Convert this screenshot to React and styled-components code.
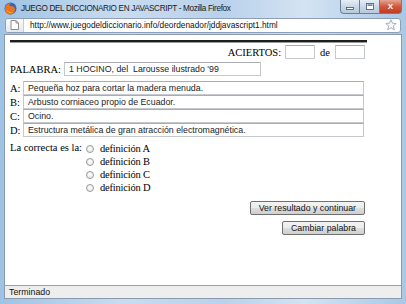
import React from 'react';
import styled, { createGlobalStyle } from 'styled-components';

const GlobalStyle = createGlobalStyle`
  html, body {
    margin: 0;
    padding: 0;
    overflow: hidden;
    background: #ffffff;
  }
`;

const Window = styled.div`
  width: 406px;
  height: 304px;
  box-sizing: border-box;
  display: flex;
  flex-direction: column;
  background: linear-gradient(90deg, #9fc3e4 0%, #c9dcef 30%, #b9d1ea 55%, #d4e3f2 75%, #a8c8e6 100%);
  padding: 0 4px 5px 4px;
  font-family: "Liberation Sans", Arial, sans-serif;
`;

const TitleBar = styled.div`
  height: 16px;
  display: flex;
  align-items: center;
  gap: 4px;
`;

const TitleText = styled.span`
  font-size: 8.2px;
  letter-spacing: -0.35px;
  color: #1a1a1a;
  white-space: nowrap;
`;

const WinButtons = styled.div`
  margin-left: auto;
  display: flex;
  align-self: flex-start;
`;

const WinButton = styled.div`
  width: ${p => (p.$close ? 22 : 20)}px;
  height: 14px;
  box-sizing: border-box;
  border: 1px solid #6d7f95;
  border-top: none;
  border-left-width: ${p => (p.$first ? 1 : 0)}px;
  border-radius: ${p => (p.$first ? '0 0 0 4px' : p.$close ? '0 0 4px 0' : '0')};
  background: ${p => (p.$close
    ? 'linear-gradient(#e8a493, #d0583e 50%, #c23b20)'
    : 'linear-gradient(#e6eef7, #c9d7e6 50%, #b7c9dc)')};
  display: flex;
  align-items: center;
  justify-content: center;
  color: ${p => (p.$close ? '#fff' : '#44526a')};
  font-size: 8px;
  font-weight: bold;
`;

const AddressRow = styled.div`
  height: 18px;
  display: flex;
  align-items: center;
  padding: 0 1px;
`;

const AddressField = styled.div`
  flex: 1;
  height: 15px;
  box-sizing: border-box;
  border: 1px solid #8d9fb8;
  border-radius: 3px;
  background: #ffffff;
  display: flex;
  align-items: center;
`;

const SiteButton = styled.div`
  width: 18px;
  height: 13px;
  box-sizing: border-box;
  border-right: 1px solid #c3ccd8;
  border-radius: 3px 0 0 3px;
  background: linear-gradient(#fbfbfb, #e4e8ee);
  display: flex;
  align-items: center;
  justify-content: center;
`;

const UrlText = styled.span`
  margin-left: 6px;
  font-size: 8.3px;
  color: #111;
  white-space: nowrap;
`;

const Star = styled.div`
  margin-left: auto;
  margin-right: 3px;
  display: flex;
`;

const Content = styled.div`
  flex: 1;
  background: #ffffff;
  border: 1px solid #8a9bb0;
  border-bottom: none;
  padding: 5px 0 0 5px;
  font-family: "Liberation Serif", "Times New Roman", serif;
  font-size: 10.5px;
  color: #000;
`;

const Form = styled.div`
  width: 357px;
  display: flex;
  flex-direction: column;
`;

const Rule = styled.div`
  height: 2px;
  background: #1e1e1e;
  border-bottom: 1px solid #9a9a9a;
`;

const ScoreRow = styled.div`
  display: flex;
  justify-content: flex-end;
  align-items: center;
  gap: 3px;
  margin-top: 2px;
  padding-right: 2px;
`;

const Label = styled.span`
  white-space: nowrap;
  margin: ${p => p.$margin || '0'};
`;

const Field = styled.div`
  width: ${p => p.$w}px;
  height: 14px;
  box-sizing: border-box;
  border: 1px solid #c5c8cd;
  border-top-color: #a9acb2;
  background: #fff;
  font-family: "Liberation Sans", Arial, sans-serif;
  font-size: 8.8px;
  color: #222;
  display: flex;
  align-items: center;
  padding-left: 4px;
  white-space: nowrap;
  overflow: hidden;
`;

const WordRow = styled.div`
  display: flex;
  align-items: center;
  gap: 3px;
  margin-top: 3px;
`;

const Definitions = styled.div`
  display: flex;
  flex-direction: column;
  margin-top: 5px;
`;

const DefRow = styled.div`
  display: flex;
  align-items: center;
  height: 14px;
`;

const Letter = styled.span`
  width: 13px;
`;

const AnswerBlock = styled.div`
  display: grid;
  grid-template-columns: 76px auto;
  margin-top: 5px;
`;

const Options = styled.div`
  display: flex;
  flex-direction: column;
`;

const Option = styled.label`
  display: flex;
  align-items: center;
  height: 13px;
  gap: 6px;
  letter-spacing: -0.2px;
`;

const Radio = styled.span`
  width: 8px;
  height: 8px;
  box-sizing: border-box;
  border-radius: 50%;
  border: 1px solid #9a9a9a;
  background: radial-gradient(circle at 50% 40%, #ffffff, #e2e2e2);
`;

const Buttons = styled.div`
  display: flex;
  flex-direction: column;
  align-items: flex-end;
  gap: 6px;
  margin-top: 7px;
  padding-right: 2px;
`;

const Button = styled.div`
  height: 14px;
  box-sizing: border-box;
  padding: 0 8px;
  border: 1px solid #707070;
  border-radius: 2px;
  background: linear-gradient(#f3f3f3 0%, #ebebeb 50%, #dddddd 51%, #cfcfcf 100%);
  font-family: "Liberation Sans", Arial, sans-serif;
  font-size: 8.8px;
  color: #111;
  display: flex;
  align-items: center;
  white-space: nowrap;
`;

const StatusBar = styled.div`
  height: 14px;
  box-sizing: border-box;
  background: #efeeee;
  border: 1px solid #8a9bb0;
  border-top-color: #a0a0a0;
  display: flex;
  align-items: center;
  padding-left: 4px;
  font-size: 8.8px;
  color: #111;
`;

const FirefoxIcon = () => (
  <svg width="13" height="13" viewBox="0 0 13 13">
    <circle cx="6.5" cy="6.5" r="6" fill="#3a62b8" />
    <path d="M1 7 C1 3 4 1 7 1 C5 2 5 4 7 4 C10 4 11 6 11 8 C11 11 8 12.5 6 12.5 C3 12.5 1 10 1 7 Z" fill="#e8741c" />
    <path d="M2 6 C3 9 6 11 9 10 C7 12 3 11 2 6 Z" fill="#f6b33a" />
  </svg>
);

const PageIcon = () => (
  <svg width="9" height="10" viewBox="0 0 9 10">
    <path d="M1 0.5 H6 L8.5 3 V9.5 H1 Z" fill="#fff" stroke="#8c8c8c" />
    <path d="M6 0.5 V3 H8.5" fill="none" stroke="#8c8c8c" />
  </svg>
);

const StarIcon = () => (
  <svg width="12" height="12" viewBox="0 0 12 12">
    <path d="M6 0.8 L7.5 4.2 L11.2 4.5 L8.4 7 L9.3 10.8 L6 8.8 L2.7 10.8 L3.6 7 L0.8 4.5 L4.5 4.2 Z"
      fill="#f6f8fb" stroke="#9aa6b6" strokeWidth="0.9" strokeLinejoin="round" />
  </svg>
);

const MinIcon = () => (
  <svg width="8" height="6" viewBox="0 0 8 6">
    <rect x="0.5" y="3.5" width="7" height="2" fill="#fff" stroke="#44526a" strokeWidth="0.8" />
  </svg>
);

const MaxIcon = () => (
  <svg width="8" height="7" viewBox="0 0 8 7">
    <rect x="0.5" y="0.5" width="7" height="6" fill="#fff" stroke="#44526a" strokeWidth="0.8" />
    <rect x="1.5" y="1.5" width="5" height="1.2" fill="#44526a" />
  </svg>
);

const definitions = [
  ['A:', 'Pequeña hoz para cortar la madera menuda.'],
  ['B:', 'Arbusto corniaceo propio de Ecuador.'],
  ['C:', 'Ocino.'],
  ['D:', 'Estructura metálica de gran atracción electromagnética.'],
];

const options = ['definición A', 'definición B', 'definición C', 'definición D'];

const App = () => {
  return (
    <>
      <GlobalStyle />
      <Window>
        <TitleBar>
          <FirefoxIcon />
          <TitleText>JUEGO DEL DICCIONARIO EN JAVASCRIPT - Mozilla Firefox</TitleText>
          <WinButtons>
            <WinButton $first><MinIcon /></WinButton>
            <WinButton><MaxIcon /></WinButton>
            <WinButton $close>X</WinButton>
          </WinButtons>
        </TitleBar>
        <AddressRow>
          <AddressField>
            <SiteButton>
              <PageIcon />
            </SiteButton>
            <UrlText>http://www.juegodeldiccionario.info/deordenador/jddjavascript1.html</UrlText>
            <Star>
              <StarIcon />
            </Star>
          </AddressField>
        </AddressRow>
        <Content>
          <Form>
            <Rule />
            <ScoreRow>
              <Label $margin="0 1px 0 0">ACIERTOS:</Label>
              <Field $w={30} />
              <Label $margin="0 2px">de</Label>
              <Field $w={30} />
            </ScoreRow>
            <WordRow>
              <Label>PALABRA:</Label>
              <Field $w={197}>1 HOCINO, del&nbsp; Larousse ilustrado '99</Field>
            </WordRow>
            <Definitions>
              {definitions.map(([letter, text]) => (
                <DefRow key={letter}>
                  <Letter>{letter}</Letter>
                  <Field $w={341}>{text}</Field>
                </DefRow>
              ))}
            </Definitions>
            <AnswerBlock>
              <Label>La correcta es la:</Label>
              <Options>
                {options.map(o => (
                  <Option key={o}>
                    <Radio />
                    {o}
                  </Option>
                ))}
              </Options>
            </AnswerBlock>
            <Buttons>
              <Button>Ver resultado y continuar</Button>
              <Button>Cambiar palabra</Button>
            </Buttons>
          </Form>
        </Content>
        <StatusBar>Terminado</StatusBar>
      </Window>
    </>
  );
};

export default App;
